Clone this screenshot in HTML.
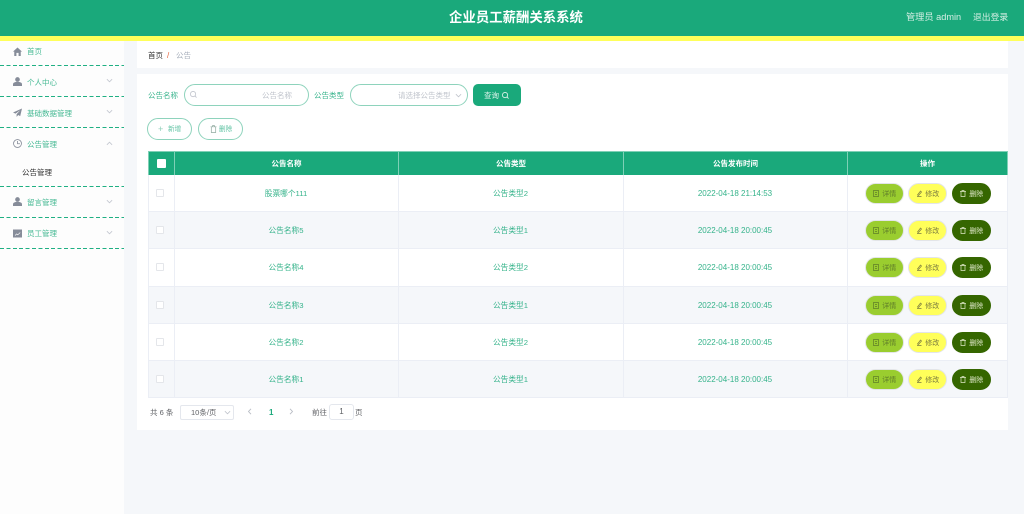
<!DOCTYPE html>
<html lang="zh"><head><meta charset="utf-8"><title>企业员工薪酬关系系统</title>
<style>
*{box-sizing:border-box;margin:0;padding:0}
html,body{width:1024px;height:514px;overflow:hidden;background:#f5f7fa;font-family:"Liberation Sans","Noto Sans CJK SC",sans-serif}
body{filter:blur(.3px)}
.a{position:absolute;white-space:nowrap}
.hd{left:0;top:0;width:1024px;height:36px;background:#1aa97b}
.yl{left:0;top:36px;width:1024px;height:5px;background:#ffff5a}
.side{left:0;top:41px;width:124px;height:473px;background:#fdfdfd}
.dash{left:0;width:124px;height:1.4px;background:repeating-linear-gradient(90deg,#1fb083 0 4px,transparent 4px 6.4px)}
.mt{left:27px;font-size:7.5px;line-height:12px;color:#1aa97b;opacity:.8}
.ic{left:13px;width:9px;height:9px;fill:#868c99}
.chev{left:106px;width:7px;height:7px;fill:none;stroke:#c4c8d0;stroke-width:1}
.panel{background:#fff;left:137px;width:871px}
.lab{font-size:7.5px;line-height:12px;color:#1aa97b;opacity:.85}
.inp{border:1px solid #8ed3bc;border-radius:11px;background:#fff;height:22px}
.ph{font-size:7.5px;line-height:12px;color:#c0c4cc}
.th{top:151px;height:24px;background:#1aa97b;color:#fff;font-size:7.5px;font-weight:bold;line-height:24px;text-align:center;border-left:1px solid #7fd0b6;border-top:1px solid #7fd0b6}
.row{left:148px;width:860px;height:37.2px;border-bottom:1px solid #ebeef5}
.v{top:0;bottom:0;width:1px;background:#ebeef5}
.td{font-size:7.7px;line-height:37px;color:#1aa97b;text-align:center;opacity:.88;top:0;height:37px}
.dt{font-size:8px}
.cb{left:8px;top:14px;width:8px;height:8px;border:1px solid #e4e6ea;background:#fff;border-radius:1px}
.btn{top:8px;width:39px;height:21px;border-radius:11px;font-size:7px;line-height:21px;text-align:center;border:1px solid #e3e5e8}
.b1{left:717px;background:#9acd2f;color:#5f7d2a}
.b2{left:760px;background:#ffff5a;color:#7a7a40}
.b3{left:804px;background:#356600;color:#dfe8c8;border-color:#356600}
.bi{display:inline-block;width:6px;height:7px;vertical-align:-1px;margin-right:3.5px;fill:none;stroke:currentColor;stroke-width:.7}
</style></head><body>
<div class="a hd"></div><div class="a yl"></div>
<div class="a" style="left:380px;width:272px;top:8px;text-align:center;color:#fff;font-size:13.4px;font-weight:bold;line-height:20px">企业员工薪酬关系系统</div>
<div class="a" style="left:906px;top:11px;color:#d6efe5;font-size:9.2px;line-height:13px">管理员 admin</div>
<div class="a" style="left:973px;top:11px;color:#d6efe5;font-size:8.8px;line-height:13px">退出登录</div>

<div class="a side"></div>
<svg class="a ic" style="top:47px" viewBox="0 0 10 10"><path d="M5 .5 0 5.2h1.4V10h2.400V6.500h2.400V10h2.400V5.200H10z"/></svg>
<div class="a mt" style="top:46px">首页</div>
<div class="a dash" style="top:65px"></div>
<svg class="a ic" style="top:77px" viewBox="0 0 10 10"><circle cx="5" cy="2.800" r="2.600"/><path d="M0 10V8c0-1.700 2-2.600 5-2.600S10 6.300 10 8v2z"/></svg>
<div class="a mt" style="top:77px">个人中心</div>
<svg class="a chev" style="top:77px" viewBox="0 0 8 8"><path d="M1 2.500 4 5.500 7 2.500"/></svg>
<div class="a dash" style="top:96px"></div>
<svg class="a ic" style="top:108px" viewBox="0 0 10 10"><path d="M10 .5 0 5l2.800 1.300L8 2.500 4 7v2.800l1.800-2L8 9z"/></svg>
<div class="a mt" style="top:108px">基础数据管理</div>
<svg class="a chev" style="top:108px" viewBox="0 0 8 8"><path d="M1 2.500 4 5.500 7 2.500"/></svg>
<div class="a dash" style="top:127px"></div>
<svg class="a ic" style="top:139px;fill:none;stroke:#868c99;stroke-width:.9" viewBox="0 0 10 10"><circle cx="5" cy="5" r="4.400"/><path d="M5 2.200V5.300H7.800"/></svg>
<div class="a mt" style="top:139px">公告管理</div>
<svg class="a chev" style="top:140px" viewBox="0 0 8 8"><path d="M1 5.500 4 2.500 7 5.500"/></svg>
<div class="a" style="left:22px;top:167px;font-size:7.5px;line-height:12px;color:#333">公告管理</div>
<div class="a dash" style="top:186px"></div>
<svg class="a ic" style="top:197px" viewBox="0 0 10 10"><circle cx="5" cy="2.800" r="2.600"/><path d="M0 10V8c0-1.700 2-2.600 5-2.600S10 6.300 10 8v2z"/></svg>
<div class="a mt" style="top:197px">留言管理</div>
<svg class="a chev" style="top:198px" viewBox="0 0 8 8"><path d="M1 2.500 4 5.500 7 2.500"/></svg>
<div class="a dash" style="top:217px"></div>
<svg class="a ic" style="top:229px" viewBox="0 0 10 10"><path fill-rule="evenodd" d="M0 .5h10v9H0zM2 7l2-2 1.300 1L8 3.500v1L5.300 7 4 6 2.600 7.500z"/></svg>
<div class="a mt" style="top:228px">员工管理</div>
<svg class="a chev" style="top:229px" viewBox="0 0 8 8"><path d="M1 2.500 4 5.500 7 2.500"/></svg>
<div class="a dash" style="top:248px"></div>

<div class="a panel" style="top:41px;height:27px"></div>
<div class="a" style="left:148px;top:50px;font-size:7.5px;line-height:12px;color:#333">首页</div>
<div class="a" style="left:167px;top:50px;font-size:8px;line-height:12px;color:#e8643c">/</div>
<div class="a" style="left:176px;top:50px;font-size:7.5px;line-height:12px;color:#a8b0bc">公告</div>

<div class="a panel" style="top:74px;height:356px"></div>
<div class="a lab" style="left:148px;top:90px">公告名称</div>
<div class="a inp" style="left:184px;top:84px;width:125px"></div>
<svg class="a" style="left:190px;top:91px;width:7px;height:7px;fill:none;stroke:#c0c4cc;stroke-width:.9" viewBox="0 0 8 8"><circle cx="3.500" cy="3.500" r="3"/><path d="M5.800 5.800 7.500 7.500"/></svg>
<div class="a ph" style="left:262px;top:90px">公告名称</div>
<div class="a lab" style="left:314px;top:90px">公告类型</div>
<div class="a inp" style="left:350px;top:84px;width:118px"></div>
<div class="a ph" style="left:398px;top:90px">请选择公告类型</div>
<svg class="a" style="left:455px;top:92px;width:7px;height:7px;fill:none;stroke:#c0c4cc;stroke-width:.9" viewBox="0 0 8 8"><path d="M1 2.500 4 5.500 7 2.500"/></svg>
<div class="a" style="left:473px;top:84px;width:48px;height:22px;border-radius:5px;background:#1aa97b;color:#e4f5ee;font-size:7.5px;line-height:23px;padding-left:11px">查询</div>
<svg class="a" style="left:502px;top:91.500px;width:7px;height:7px;fill:none;stroke:#e4f5ee;stroke-width:.9" viewBox="0 0 8 8"><circle cx="3.500" cy="3.500" r="3"/><path d="M5.800 5.800 7.500 7.500"/></svg>

<div class="a inp" style="left:147px;top:118px;width:45px"></div>
<div class="a" style="left:158px;top:123px;font-size:9px;line-height:12px;color:#8fcfb9">+</div>
<div class="a lab" style="left:168px;top:124px;font-size:6.6px;opacity:.7">新增</div>
<div class="a inp" style="left:198px;top:118px;width:45px"></div>
<svg class="a" style="left:210px;top:125px;width:7px;height:8px;fill:none;stroke:#8fa99f;stroke-width:.7" viewBox="0 0 7 8"><path d="M.5 1.800h6M1.300 1.800v5.700h4.400V1.800M2.500 1.800V.6h2v1.200"/></svg>
<div class="a lab" style="left:219px;top:124px;font-size:6.6px;opacity:.7">删除</div>

<div class="a th" style="left:148px;width:26px"></div>
<div class="a" style="left:157px;top:159px;width:9px;height:9px;background:#fff;border-radius:1px"></div>
<div class="a th" style="left:174px;width:224px">公告名称</div>
<div class="a th" style="left:398px;width:225px">公告类型</div>
<div class="a th" style="left:623px;width:224px">公告发布时间</div>
<div class="a th" style="left:847px;width:161px;border-right:1px solid #7fd0b6">操作</div>

<div class="a row" style="top:175px;background:#fff"><div class="a v" style="left:0"></div><div class="a v" style="left:26px"></div><div class="a v" style="left:250px"></div><div class="a v" style="left:475px"></div><div class="a v" style="left:699px"></div><div class="a v" style="right:0"></div><div class="a cb"></div><div class="a td" style="left:26px;width:224px">股票哪个111</div><div class="a td" style="left:250px;width:225px">公告类型2</div><div class="a td dt" style="left:475px;width:224px">2022-04-18 21:14:53</div><div class="a btn b1"><svg class="bi" viewBox="0 0 6 7"><path d="M.5.500h5v6h-5zM2 2.500h2M2 4.500h2"/></svg>详情</div><div class="a btn b2"><svg class="bi" viewBox="0 0 6 7"><path d="M1 6.500h4.500M1.500 5 4.500 1 5.500 2 2.500 5.500z"/></svg>修改</div><div class="a btn b3"><svg class="bi" viewBox="0 0 6 7"><path d="M0 1.500h6M1 1.500v5h4v-5M2 1.500V.5h2v1"/></svg>删除</div></div>

<div class="a row" style="top:212.2px;background:#f5f7fa"><div class="a v" style="left:0"></div><div class="a v" style="left:26px"></div><div class="a v" style="left:250px"></div><div class="a v" style="left:475px"></div><div class="a v" style="left:699px"></div><div class="a v" style="right:0"></div><div class="a cb"></div><div class="a td" style="left:26px;width:224px">公告名称5</div><div class="a td" style="left:250px;width:225px">公告类型1</div><div class="a td dt" style="left:475px;width:224px">2022-04-18 20:00:45</div><div class="a btn b1"><svg class="bi" viewBox="0 0 6 7"><path d="M.5.500h5v6h-5zM2 2.500h2M2 4.500h2"/></svg>详情</div><div class="a btn b2"><svg class="bi" viewBox="0 0 6 7"><path d="M1 6.500h4.500M1.500 5 4.500 1 5.500 2 2.500 5.500z"/></svg>修改</div><div class="a btn b3"><svg class="bi" viewBox="0 0 6 7"><path d="M0 1.500h6M1 1.500v5h4v-5M2 1.500V.5h2v1"/></svg>删除</div></div>

<div class="a row" style="top:249.4px;background:#fff"><div class="a v" style="left:0"></div><div class="a v" style="left:26px"></div><div class="a v" style="left:250px"></div><div class="a v" style="left:475px"></div><div class="a v" style="left:699px"></div><div class="a v" style="right:0"></div><div class="a cb"></div><div class="a td" style="left:26px;width:224px">公告名称4</div><div class="a td" style="left:250px;width:225px">公告类型2</div><div class="a td dt" style="left:475px;width:224px">2022-04-18 20:00:45</div><div class="a btn b1"><svg class="bi" viewBox="0 0 6 7"><path d="M.5.500h5v6h-5zM2 2.500h2M2 4.500h2"/></svg>详情</div><div class="a btn b2"><svg class="bi" viewBox="0 0 6 7"><path d="M1 6.500h4.500M1.500 5 4.500 1 5.500 2 2.500 5.500z"/></svg>修改</div><div class="a btn b3"><svg class="bi" viewBox="0 0 6 7"><path d="M0 1.500h6M1 1.500v5h4v-5M2 1.500V.5h2v1"/></svg>删除</div></div>

<div class="a row" style="top:286.6px;background:#f5f7fa"><div class="a v" style="left:0"></div><div class="a v" style="left:26px"></div><div class="a v" style="left:250px"></div><div class="a v" style="left:475px"></div><div class="a v" style="left:699px"></div><div class="a v" style="right:0"></div><div class="a cb"></div><div class="a td" style="left:26px;width:224px">公告名称3</div><div class="a td" style="left:250px;width:225px">公告类型1</div><div class="a td dt" style="left:475px;width:224px">2022-04-18 20:00:45</div><div class="a btn b1"><svg class="bi" viewBox="0 0 6 7"><path d="M.5.500h5v6h-5zM2 2.500h2M2 4.500h2"/></svg>详情</div><div class="a btn b2"><svg class="bi" viewBox="0 0 6 7"><path d="M1 6.500h4.500M1.500 5 4.500 1 5.500 2 2.500 5.500z"/></svg>修改</div><div class="a btn b3"><svg class="bi" viewBox="0 0 6 7"><path d="M0 1.500h6M1 1.500v5h4v-5M2 1.500V.5h2v1"/></svg>删除</div></div>

<div class="a row" style="top:323.8px;background:#fff"><div class="a v" style="left:0"></div><div class="a v" style="left:26px"></div><div class="a v" style="left:250px"></div><div class="a v" style="left:475px"></div><div class="a v" style="left:699px"></div><div class="a v" style="right:0"></div><div class="a cb"></div><div class="a td" style="left:26px;width:224px">公告名称2</div><div class="a td" style="left:250px;width:225px">公告类型2</div><div class="a td dt" style="left:475px;width:224px">2022-04-18 20:00:45</div><div class="a btn b1"><svg class="bi" viewBox="0 0 6 7"><path d="M.5.500h5v6h-5zM2 2.500h2M2 4.500h2"/></svg>详情</div><div class="a btn b2"><svg class="bi" viewBox="0 0 6 7"><path d="M1 6.500h4.500M1.500 5 4.500 1 5.500 2 2.500 5.500z"/></svg>修改</div><div class="a btn b3"><svg class="bi" viewBox="0 0 6 7"><path d="M0 1.500h6M1 1.500v5h4v-5M2 1.500V.5h2v1"/></svg>删除</div></div>

<div class="a row" style="top:361px;background:#f5f7fa"><div class="a v" style="left:0"></div><div class="a v" style="left:26px"></div><div class="a v" style="left:250px"></div><div class="a v" style="left:475px"></div><div class="a v" style="left:699px"></div><div class="a v" style="right:0"></div><div class="a cb"></div><div class="a td" style="left:26px;width:224px">公告名称1</div><div class="a td" style="left:250px;width:225px">公告类型1</div><div class="a td dt" style="left:475px;width:224px">2022-04-18 20:00:45</div><div class="a btn b1"><svg class="bi" viewBox="0 0 6 7"><path d="M.5.500h5v6h-5zM2 2.500h2M2 4.500h2"/></svg>详情</div><div class="a btn b2"><svg class="bi" viewBox="0 0 6 7"><path d="M1 6.500h4.500M1.500 5 4.500 1 5.500 2 2.500 5.500z"/></svg>修改</div><div class="a btn b3"><svg class="bi" viewBox="0 0 6 7"><path d="M0 1.500h6M1 1.500v5h4v-5M2 1.500V.5h2v1"/></svg>删除</div></div>

<div class="a" style="left:150px;top:407px;font-size:7.5px;line-height:12px;color:#606266">共 6 条</div>
<div class="a" style="left:180px;top:405px;width:54px;height:15px;border:1px solid #e4e7ed;border-radius:2px;font-size:7.5px;line-height:14px;color:#606266;padding-left:10px">10条/页</div>
<svg class="a" style="left:224px;top:409px;width:7px;height:7px;fill:none;stroke:#c0c4cc;stroke-width:.9" viewBox="0 0 8 8"><path d="M1 2.500 4 5.500 7 2.500"/></svg>
<svg class="a" style="left:247px;top:408px;width:6px;height:7px;fill:none;stroke:#b8bcc4;stroke-width:.9" viewBox="0 0 6 7"><path d="M4 .8 1.500 3.500 4 6.200"/></svg>
<div class="a" style="left:269px;top:407px;font-size:8px;font-weight:bold;line-height:12px;color:#1aa97b">1</div>
<svg class="a" style="left:288px;top:408px;width:6px;height:7px;fill:none;stroke:#b8bcc4;stroke-width:.9" viewBox="0 0 6 7"><path d="M2 .8 4.500 3.500 2 6.200"/></svg>
<div class="a" style="left:312px;top:407px;font-size:7.5px;line-height:12px;color:#606266">前往</div>
<div class="a" style="left:329px;top:404px;width:25px;height:16px;border:1px solid #e4e7ed;border-radius:3px;font-size:8px;line-height:14px;text-align:center;color:#606266;background:#fff">1</div>
<div class="a" style="left:355px;top:407px;font-size:7.5px;line-height:12px;color:#606266">页</div>
</body></html>
